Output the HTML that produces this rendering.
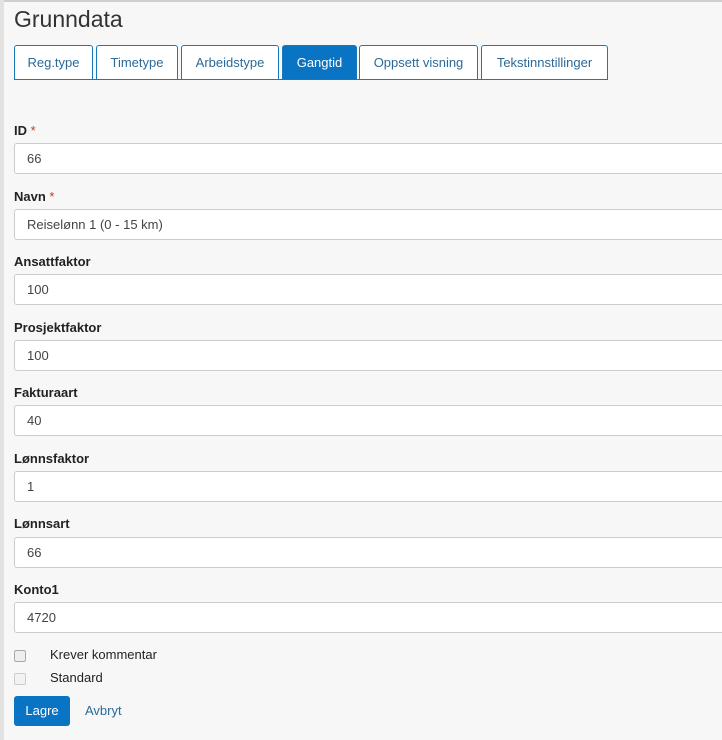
<!DOCTYPE html>
<html><head><style>
body{margin:0;width:722px;height:740px;background:#f7f7f7;font-family:"Liberation Sans",sans-serif;position:relative;overflow:hidden;color:#222}
.edge{position:absolute;left:0;top:0;width:4px;height:740px;background:#e2e2e2}
.top{position:absolute;left:0;top:0;width:722px;height:2px;background:#cfcfcf}
h1{position:absolute;left:14px;top:6px;margin:0;font-weight:normal;font-size:23px;color:#333}
.tab{position:absolute;top:45px;height:34px;border:1px solid #1a78b8;border-bottom:none;border-radius:3px 3px 0 0;background:#fff;color:#2b6a98;font-size:13px;line-height:34px;text-align:center;box-sizing:border-box}
.tab.a{background:#0a74c4;color:#fff}
.line{position:absolute;left:14px;top:79px;width:594px;height:1px;background:#1a78b8}
label{position:absolute;left:14px;font-size:13px;font-weight:bold;color:#222}
label span{color:#c0392b;font-weight:normal}
.in{position:absolute;left:14px;width:720px;height:31px;border:1px solid #ccc;border-radius:3px;background:#fff;box-sizing:border-box;font-size:13px;line-height:29px;padding-left:12px;color:#444}
.cb{position:absolute;left:14px;width:10px;height:10px;border:1px solid #aaa;border-radius:2px;background:#eee}
.ct{position:absolute;left:50px;font-size:13px;color:#222}
.btn{position:absolute;left:14px;top:696px;width:56px;height:30px;background:#0a74c4;border-radius:3px;color:#fff;font-size:13px;line-height:30px;text-align:center}
.lnk{position:absolute;left:85px;top:703px;font-size:13px;color:#2b6a98}
</style></head><body>
<div class="top"></div><div class="edge"></div>
<h1>Grunndata</h1>
<div class="tab" style="left:14px;width:79px">Reg.type</div>
<div class="tab" style="left:96px;width:82px">Timetype</div>
<div class="tab" style="left:181px;width:98px">Arbeidstype</div>
<div class="tab a" style="left:282px;width:75px">Gangtid</div>
<div class="tab" style="left:359px;width:119px">Oppsett visning</div>
<div class="tab" style="left:481px;width:127px">Tekstinnstillinger</div>
<div class="line"></div>
<label style="top:123px">ID <span>*</span></label><div class="in" style="top:143px">66</div>
<label style="top:189px">Navn <span>*</span></label><div class="in" style="top:209px">Reiselønn 1 (0 - 15 km)</div>
<label style="top:254px">Ansattfaktor</label><div class="in" style="top:274px">100</div>
<label style="top:320px">Prosjektfaktor</label><div class="in" style="top:340px">100</div>
<label style="top:385px">Fakturaart</label><div class="in" style="top:405px">40</div>
<label style="top:451px">Lønnsfaktor</label><div class="in" style="top:471px">1</div>
<label style="top:516px">Lønnsart</label><div class="in" style="top:537px">66</div>
<label style="top:582px">Konto1</label><div class="in" style="top:602px">4720</div>
<div class="cb" style="top:650px"></div><div class="ct" style="top:647px">Krever kommentar</div>
<div class="cb" style="top:673px;border-color:#ccc;background:#f2f2f2"></div><div class="ct" style="top:670px">Standard</div>
<div class="btn">Lagre</div><div class="lnk">Avbryt</div>
</body></html>
